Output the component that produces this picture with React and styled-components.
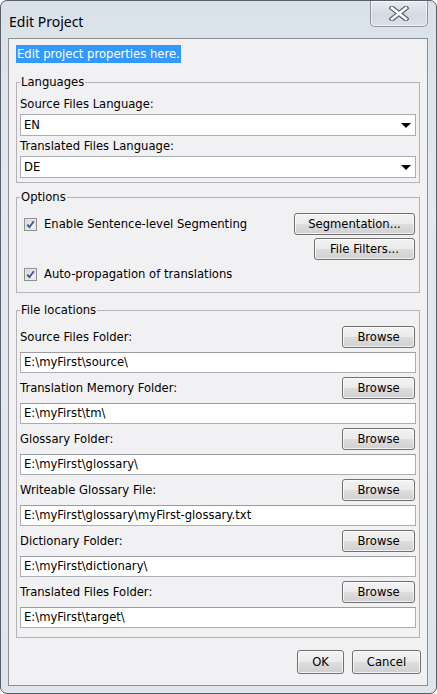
import React from "react";
import styled, { createGlobalStyle } from "styled-components";

const GlobalStyle = createGlobalStyle`
  html, body {
    margin: 0;
    padding: 0;
    background: #ffffff;
  }
  * {
    box-sizing: border-box;
  }
`;

const Window = styled.div`
  display: flex;
  flex-direction: column;
  width: 437px;
  height: 694px;
  border: 1px solid #5a5f66;
  border-radius: 7px;
  background: linear-gradient(180deg, #d9e1ea 0%, #e4e9ef 30%, #dfe5ec 100%);
  font-family: "DejaVu Sans", "Liberation Sans", sans-serif;
  font-size: 11.6px;
  color: #000;
`;

const TitleBar = styled.div`
  display: flex;
  justify-content: space-between;
  align-items: flex-start;
  height: 37px;
  flex-shrink: 0;
`;

const Title = styled.div`
  padding: 11px 0 0 8px;
  font-family: "Noto Sans", "Open Sans", sans-serif;
  font-size: 14px;
  line-height: 20px;
  color: #000;
`;

const CloseButton = styled.div`
  display: flex;
  align-items: center;
  justify-content: center;
  width: 58px;
  height: 26px;
  margin-right: 8px;
  border: 1px solid #8d949c;
  border-top: none;
  border-radius: 0 0 5px 5px;
  background: linear-gradient(180deg, #e6ebf0 0%, #d3dae2 55%, #dbe1e8 100%);
  box-shadow: inset 0 0 0 1px rgba(255, 255, 255, 0.6);
`;

const Client = styled.div`
  flex: 1;
  display: flex;
  flex-direction: column;
  margin: 0 8px 7px 7px;
  padding: 6px 7px 10px 7px;
  border: 1px solid #8a8f96;
  background: #f1f0f3;
`;

const Intro = styled.span`
  align-self: flex-start;
  padding: 0 1px;
  height: 18px;
  line-height: 18px;
  background: #3399ff;
  color: #fff;
`;

const Group = styled.fieldset`
  margin: ${(p) => p.$top}px 0 0 0;
  padding: 0 3px ${(p) => p.$bottom}px 3px;
  border: 1px solid #b4b4b6;
  border-radius: 0;
  min-width: 0;
`;

const Legend = styled.legend`
  padding: 0 1px;
  margin-left: 0;
  line-height: 14px;
  height: 14px;
`;

const Label = styled.div`
  padding-top: ${(p) => p.$pad || 0}px;
  line-height: 20px;
  height: ${(p) => (p.$pad || 0) + 20}px;
`;

const Combo = styled.div`
  display: flex;
  align-items: center;
  justify-content: space-between;
  height: 22px;
  padding: 0 3px 0 3px;
  border: 1px solid #abadb3;
  background: #fff;
`;

const Arrow = styled.span`
  width: 0;
  height: 0;
  margin-right: 1px;
  border-left: 5px solid transparent;
  border-right: 5px solid transparent;
  border-top: 5px solid #000;
`;

const Row = styled.div`
  display: flex;
  align-items: center;
  justify-content: ${(p) => p.$justify || "space-between"};
  height: ${(p) => p.$h || 22}px;
  margin-top: ${(p) => p.$top || 0}px;
`;

const Check = styled.label`
  display: flex;
  align-items: center;
  gap: 7px;
  margin-left: 4px;
`;

const Button = styled.button`
  height: ${(p) => p.$h || 22}px;
  width: ${(p) => p.$w}px;
  padding: 0;
  margin-right: ${(p) => p.$mr || 0}px;
  border: 1px solid #707070;
  border-radius: 3px;
  background: linear-gradient(180deg, #f3f3f3 0%, #ebebeb 48%, #dddddd 52%, #d0d0d0 100%);
  box-shadow: inset 0 0 0 1px rgba(255, 255, 255, 0.7);
  font-family: inherit;
  font-size: inherit;
  color: #000;
`;

const Field = styled.div`
  height: 21px;
  margin-top: 4px;
  padding-left: 3px;
  line-height: 19px;
  border: 1px solid #abadb3;
  border-top-color: #9a9ca2;
  background: #fff;
  white-space: nowrap;
  overflow: hidden;
`;

const Footer = styled.div`
  display: flex;
  justify-content: flex-end;
  gap: 8px;
  margin: 12px -1px 0 0;
`;

const CheckBox = () => (
  <svg width="13" height="13" viewBox="0 0 13 13">
    <defs>
      <linearGradient id="cbg" x1="0" y1="0" x2="1" y2="1">
        <stop offset="0" stopColor="#d8d8d8" />
        <stop offset="1" stopColor="#fbfbfb" />
      </linearGradient>
    </defs>
    <rect x="0.5" y="0.5" width="12" height="12" fill="#f4f4f4" stroke="#8e8f8f" />
    <rect x="2" y="2" width="9" height="9" fill="url(#cbg)" stroke="#c9cbd0" strokeWidth="0.6" />
    <path d="M3.3 6.6 L5.4 9.2 L9.8 3.2" fill="none" stroke="#40568e" strokeWidth="1.9" strokeLinejoin="round" />
  </svg>
);

const CloseGlyph = () => (
  <svg width="20" height="15" viewBox="0 0 20 15">
    <path d="M3 2 L17 13 M17 2 L3 13" stroke="#5c6068" strokeWidth="5" strokeLinecap="square" />
    <path d="M3 2 L17 13 M17 2 L3 13" stroke="#ffffff" strokeWidth="2.6" strokeLinecap="square" />
  </svg>
);

const folders = [
  ["Source Files Folder:", "E:\\myFirst\\source\\"],
  ["Translation Memory Folder:", "E:\\myFirst\\tm\\"],
  ["Glossary Folder:", "E:\\myFirst\\glossary\\"],
  ["Writeable Glossary File:", "E:\\myFirst\\glossary\\myFirst-glossary.txt"],
  ["Dictionary Folder:", "E:\\myFirst\\dictionary\\"],
  ["Translated Files Folder:", "E:\\myFirst\\target\\"],
];

export default function App() {
  return (
    <>
      <GlobalStyle />
      <Window>
        <TitleBar>
          <Title>Edit Project</Title>
          <CloseButton>
            <CloseGlyph />
          </CloseButton>
        </TitleBar>
        <Client>
          <Intro>Edit project properties here.</Intro>

          <Group $top={12} $bottom={4}>
            <Legend>Languages</Legend>
            <Label $pad={5}>Source Files Language:</Label>
            <Combo>
              <span>EN</span>
              <Arrow />
            </Combo>
            <Label>Translated Files Language:</Label>
            <Combo>
              <span>DE</span>
              <Arrow />
            </Combo>
          </Group>

          <Group $top={7} $bottom={7}>
            <Legend>Options</Legend>
            <Row $top={9}>
              <Check>
                <CheckBox />
                Enable Sentence-level Segmenting
              </Check>
              <Button $w={121} $mr={1}>Segmentation...</Button>
            </Row>
            <Row $top={3} $justify="flex-end">
              <Button $w={101} $mr={1}>File Filters...</Button>
            </Row>
            <Row $top={3}>
              <Check>
                <CheckBox />
                Auto-propagation of translations
              </Check>
            </Row>
          </Group>

          <Group $top={10} $bottom={9}>
            <Legend>File locations</Legend>
            {folders.map(([label, path], i) => (
              <div key={label}>
                <Row $top={i === 0 ? 9 : 4}>
                  <span>{label}</span>
                  <Button $w={73} $mr={1}>Browse</Button>
                </Row>
                <Field>{path}</Field>
              </div>
            ))}
          </Group>

          <Footer>
            <Button $w={47} $h={24}>OK</Button>
            <Button $w={69} $h={24}>Cancel</Button>
          </Footer>
        </Client>
      </Window>
    </>
  );
}
